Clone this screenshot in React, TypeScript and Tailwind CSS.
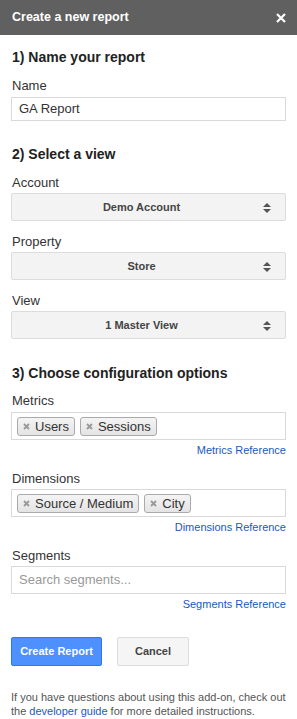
import React from "react";

const FONT = { fontFamily: '"Liberation Sans", Arial, sans-serif' };

function Heading({ children, className = "" }: { children: React.ReactNode; className?: string }) {
  return <h2 className={`text-[14px] leading-[18px] font-bold text-[#222] ${className}`}>{children}</h2>;
}

function Label({ children, className = "" }: { children: React.ReactNode; className?: string }) {
  return <div className={`text-[13px] leading-[16px] text-[#333] ${className}`}>{children}</div>;
}

function SelectBox({ value, className = "" }: { value: string; className?: string }) {
  return (
    <div
      className={`relative flex h-[28px] items-center justify-center rounded-[2px] border border-[#dcdcdc] bg-[#f3f3f3] pr-[14px] text-[11px] font-bold text-[#444] ${className}`}
    >
      <span>{value}</span>
      <svg className="absolute right-[14px] top-[9px]" width="8" height="10" viewBox="0 0 8 10">
        <path d="M4 0 L8 4 L0 4 Z" fill="#555" />
        <path d="M0 6 L8 6 L4 10 Z" fill="#555" />
      </svg>
    </div>
  );
}

function Chip({ text }: { text: string }) {
  return (
    <div className="flex h-[19px] items-center gap-[5px] rounded-[3px] border border-[#aaa] bg-gradient-to-b from-[#f4f4f4] to-[#e4e4e4] pl-[5px] pr-[5px] text-[13px] text-[#333]">
      <svg width="7" height="7" viewBox="0 0 7 7">
        <path d="M1 1 L6 6 M6 1 L1 6" stroke="#999" strokeWidth="1.8" />
      </svg>
      <span className="leading-[15px]">{text}</span>
    </div>
  );
}

function ChipBox({ items, className = "" }: { items: string[]; className?: string }) {
  return (
    <div className={`flex h-[28px] items-center gap-[5px] border border-[#d9d9d9] px-[5px] ${className}`}>
      {items.map((i) => (
        <Chip key={i} text={i} />
      ))}
    </div>
  );
}

function RefLink({ children, className = "" }: { children: React.ReactNode; className?: string }) {
  return <div className={`text-right text-[11px] leading-[13px] text-[#1a57c4] ${className}`}>{children}</div>;
}

export default function App() {
  return (
    <div style={FONT} className="w-[297px] min-h-[719px] bg-white">
      {/* Header */}
      <div className="flex h-[35px] items-center justify-between bg-[#606060] pl-[12px] pr-[11px]">
        <span className="text-[12.5px] font-bold text-white">Create a new report</span>
        <svg width="10" height="10" viewBox="0 0 10 10">
          <path d="M1 1 L9 9 M9 1 L1 9" stroke="#fff" strokeWidth="2.2" />
        </svg>
      </div>

      <div className="px-[11px]">
        {/* 1) Name */}
        <Heading className="mt-[13px] pl-[1px]">1) Name your report</Heading>
        <Label className="mt-[12px] pl-[1px]">Name</Label>
        <div className="mt-[3px] flex h-[24px] items-center border border-[#d9d9d9] pl-[7px] text-[13px] text-[#333]">
          GA Report
        </div>

        {/* 2) View */}
        <Heading className="mt-[24px] pl-[1px]">2) Select a view</Heading>
        <Label className="mt-[12px] pl-[1px]">Account</Label>
        <SelectBox value="Demo Account" className="mt-[2px]" />
        <Label className="mt-[13px] pl-[1px]">Property</Label>
        <SelectBox value="Store" className="mt-[2px]" />
        <Label className="mt-[13px] pl-[1px]">View</Label>
        <SelectBox value="1 Master View" className="mt-[2px]" />

        {/* 3) Config */}
        <Heading className="mt-[25px] pl-[1px]">3) Choose configuration options</Heading>
        <Label className="mt-[11px] pl-[1px]">Metrics</Label>
        <ChipBox items={["Users", "Sessions"]} className="mt-[3px]" />
        <RefLink className="mt-[4px]">Metrics Reference</RefLink>

        <Label className="mt-[14px] pl-[1px]">Dimensions</Label>
        <ChipBox items={["Source / Medium", "City"]} className="mt-[2px]" />
        <RefLink className="mt-[4px]">Dimensions Reference</RefLink>

        <Label className="mt-[14px] pl-[1px]">Segments</Label>
        <div className="mt-[2px] flex h-[28px] items-center border border-[#d9d9d9] pl-[7px] text-[13px] text-[#999]">
          Search segments...
        </div>
        <RefLink className="mt-[4px]">Segments Reference</RefLink>

        {/* Buttons */}
        <div className="mt-[26px] flex gap-[15px]">
          <button className="h-[29px] w-[91px] rounded-[2px] border border-[#3079ed] bg-[#4d90fe] text-[11px] font-bold text-white">
            Create Report
          </button>
          <button className="h-[29px] w-[72px] rounded-[2px] border border-[#dcdcdc] bg-[#f5f5f5] text-[11px] font-bold text-[#444]">
            Cancel
          </button>
        </div>

        {/* Footer */}
        <div className="mt-[24px] text-[11px] leading-[14px] text-[#555]">
          <div>If you have questions about using this add-on, check out</div>
          <div className="flex gap-[3px]">
            <span>the</span>
            <a className="text-[#1a57c4]">developer guide</a>
            <span>for more detailed instructions.</span>
          </div>
        </div>
      </div>
    </div>
  );
}
